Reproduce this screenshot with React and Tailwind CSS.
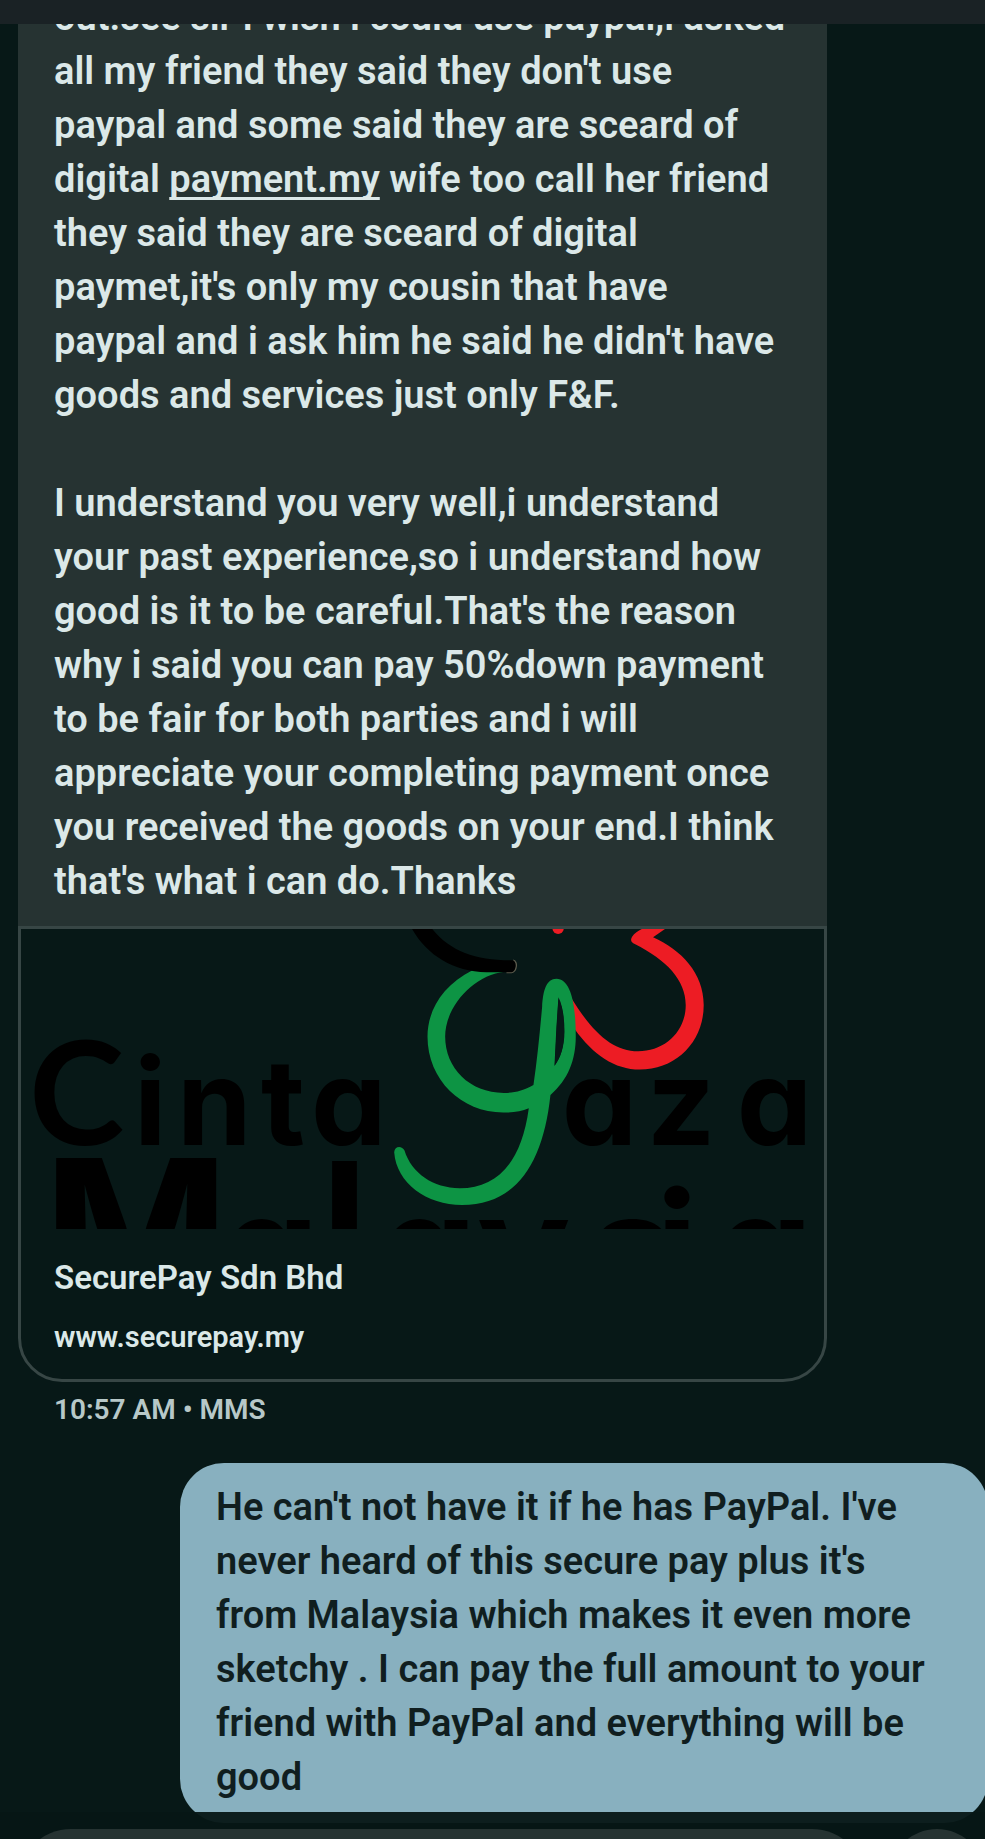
import React, { useState } from 'react';

const beforeLink = [
  'out.see sir i wish i could use paypal,i asked',
  "all my friend they said they don't use",
  'paypal and some said they are sceard of',
];

const afterLink = [
  'they said they are sceard of digital',
  "paymet,it's only my cousin that have",
  "paypal and i ask him he said he didn't have",
  'goods and services just only F&F.',
];

const secondPart = [
  'I understand you very well,i understand',
  'your past experience,so i understand how',
  "good is it to be careful.That's the reason",
  'why i said you can pay 50%down payment',
  'to be fair for both parties and i will',
  'appreciate your completing payment once',
  'you received the goods on your end.I think',
  "that's what i can do.Thanks",
];

const reply = [
  "He can't not have it if he has PayPal. I've",
  "never heard of this secure pay plus it's",
  'from Malaysia which makes it even more',
  'sketchy . I can pay the full amount to your',
  'friend with PayPal and everything will be',
  'good',
];

function Lines({ lines }) {
  return lines.map((line) => (
    <span key={line} className="block whitespace-nowrap">
      {line}
    </span>
  ));
}

function PreviewArt() {
  return (
    <svg viewBox="0 0 803 300" className="block w-full" role="img" aria-label="Cinta Gaza Malaysia">
      <g className="font-[Inter] [font-feature-settings:'cv11']" fill="#000">
        <text x="8" y="216" fontSize="144" fontWeight="700" className="font-[Lato]">C</text>
        <text x="113 156 240 290" y="216" fontSize="120" fontWeight="700">inta</text>
        <text x="541 626 716" y="216" fontSize="120" fontWeight="700">aza</text>
        <text x="22" y="374" fontSize="200" fontWeight="700">M</text>
        <text x="200" y="376" fontSize="156" fontWeight="700">a</text>
        <text x="298" y="374" fontSize="195" fontWeight="600">l</text>
        <text x="358 456 568 635 694" y="376" fontSize="156" fontWeight="700">aysia</text>
      </g>
      <g transform="translate(359 -29) scale(0.33333)">
        <circle cx="535" cy="85" r="17" fill="#ed1c24" />
        <path
          fill="#ed1c24"
          d="M792 84C780 90 765 98 757 110C750 122 756 128 765 132C860 180 918 240 918 315C918 395 855 454 775 454C700 454 640 400 575 295L540 290L585 388C640 465 705 509 780 509C890 509 972 425 972 315C972 220 905 150 820 112L860 84Z"
        />
        {/* green loop, the inner gap is cut out with evenodd */}
        <path
          fill="#0d9444"
          fillRule="evenodd"
          d="M278 211C190 255 143 330 143 410C143 540 245 638 370 638C400 638 425 634 447 625C425 790 350 865 240 865C160 865 95 820 74 752C66 736 44 738 43 757C50 850 140 915 247 915C410 915 490 790 512 585C565 540 588 480 588 410C588 300 570 237 530 236C500 236 490 270 487 320C480 400 472 480 461 555C430 572 405 579 372 579C270 579 196 505 196 410C196 320 280 225 375 215ZM536 292C550 320 554 360 554 395C554 440 542 475 524 498L530 380Z"
        />
        <path fill="#071817" d="M536 296C550 322 553 360 553 395C553 440 542 475 525 496L531 380Z" />
        <path d="M380 217H395C412 215 414 182 400 181" fill="none" stroke="#5b5a4c" strokeWidth="5" />
        <path fill="#000" d="M95 84C140 165 220 215 320 217H395C410 215 412 182 398 181C290 181 210 155 155 84Z" />
      </g>
    </svg>
  );
}

function App() {
  const [message, setMessage] = useState('');

  return (
    <div className="flex h-screen flex-col overflow-hidden bg-[#071817] font-[Roboto,sans-serif] font-semibold text-[#dbe8e8]">
      <header className="z-10 h-6 shrink-0 bg-[#1a2225]" />

      <main className="-mb-[11px] flex min-h-0 flex-1 flex-col justify-end text-[38px] leading-[54px]">
        <article className="ml-[18px] w-[82.1%]">
          <div className="bg-[#263332] px-9 pb-[18px]">
            <p>
              <Lines lines={beforeLink} />
              <span className="block whitespace-nowrap">
                digital{' '}
                <a href="#payment" className="underline decoration-[3px] underline-offset-[5px] [text-decoration-skip-ink:none]">
                  payment.my
                </a>{' '}
                wife too call her friend
              </span>
              <Lines lines={afterLink} />
            </p>
            <p className="mt-[54px]">
              <Lines lines={secondPart} />
            </p>
          </div>
          <a href="#securepay" className="block overflow-hidden rounded-b-[44px] border-[3px] border-[#374645]">
            <PreviewArt />
            <div className="px-[33px] pt-6 pb-5">
              <h2 className="text-[33px] leading-[50px]">SecurePay Sdn Bhd</h2>
              <p className="mt-3 text-[29px] leading-[44px]">www.securepay.my</p>
            </div>
          </a>
          <p className="px-9 pt-2 text-[28px] leading-[40px] text-[#b7c8c8]">10:57 AM&nbsp;•&nbsp;MMS</p>
        </article>

        <article className="mt-[33px] -mr-[3px] ml-[180px] rounded-[44px] bg-[#88b0bf] px-9 pt-[17px] pb-[19px] text-[#101e1f]">
          <Lines lines={reply} />
        </article>
      </main>

      <footer className="z-10 flex h-[27px] shrink-0 items-start gap-6 bg-[#061615]/95 pt-[17px] pl-[18px]">
        <input
          type="text"
          aria-label="Message"
          value={message}
          onChange={(e) => setMessage(e.target.value)}
          className="h-[106px] min-w-0 flex-1 rounded-full bg-[#263332] px-9 outline-none"
        />
        <button type="button" aria-label="Send" className="size-24 shrink-0 rounded-full bg-[#263332]" />
      </footer>
    </div>
  );
}

export default App;
